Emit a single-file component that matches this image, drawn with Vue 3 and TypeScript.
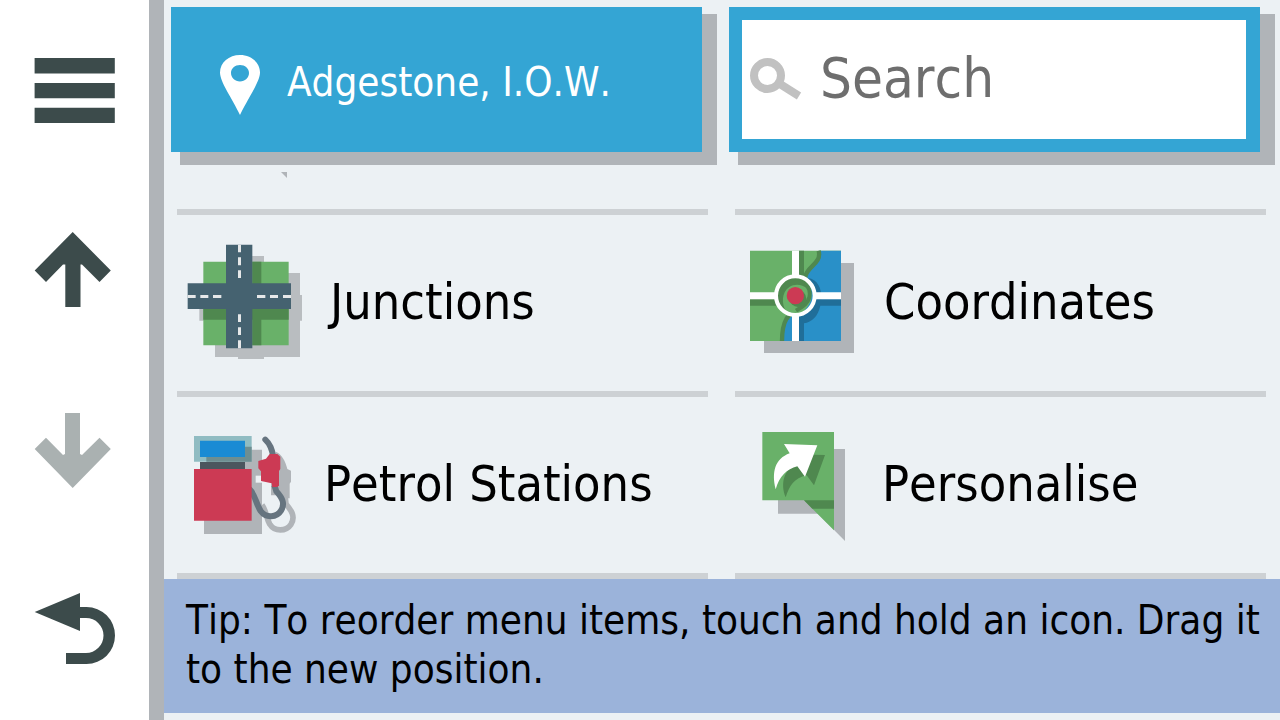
<script setup lang="ts">
import { ref } from 'vue'

type IconName = 'junction' | 'coordinates' | 'petrol' | 'personalise'

interface MenuItem {
  label: string
  icon: IconName
}

const query = ref('')
const items: MenuItem[] = [
  { label: 'Junctions', icon: 'junction' },
  { label: 'Coordinates', icon: 'coordinates' },
  { label: 'Petrol Stations', icon: 'petrol' },
  { label: 'Personalise', icon: 'personalise' },
]
</script>

<template>
  <div class="screen">
    <nav class="sidebar" aria-label="Navigation">
      <button type="button" aria-label="Menu">
        <svg viewBox="0 0 149 180"><path d="M34.600 58h80.200v15.500H34.600zM34.600 83h80.200v15.200H34.600zM34.600 107.700h80.200v15.300H34.600z" /></svg>
      </button>
      <button type="button" aria-label="Scroll up">
        <svg viewBox="0 180 149 180"><path d="M72.700 232 110.800 270.500 99.500 282 82 264.500H80.500V307H65.300V264.500H63L46 282 34.700 270.500Z" /></svg>
      </button>
      <button type="button" aria-label="Scroll down" disabled>
        <svg viewBox="0 360 149 180"><path d="M72.700 488 34.700 449 46 437.800 63 455 65 454V413H80V454L82 455 99.500 437.800 110.800 449Z" /></svg>
      </button>
      <button type="button" aria-label="Back">
        <svg viewBox="0 540 149 180">
          <path d="M34.700 612 80 593V607H86.500A28.500 28.500 0 0 1 86.500 664H66V653H86A17.500 17.500 0 0 0 86 618H80V631Z" />
        </svg>
      </button>
    </nav>

    <main class="content">
      <header class="top">
        <button type="button" class="place">
          <svg class="pin" viewBox="220 55 40 60">
            <path fill-rule="evenodd" d="M240 55C251 55 260 62.500 260 72.500C260 82 248 98 240 115C232 98 220 82 220 72.500C220 62.500 229 55 240 55ZM240 65C235 65 231 68.500 231 73C231 77.800 235 81.500 240 81.500C245 81.500 249 77.800 249 73C249 68.500 245 65 240 65Z" />
          </svg>
          <span>Adgestone, I.O.W.</span>
        </button>
        <label class="search">
          <svg class="glass" viewBox="750 58 52 42">
            <circle cx="767.5" cy="75.500" r="13.500" />
            <path d="M780 84 799 96" />
          </svg>
          <input v-model="query" type="text" placeholder="Search" aria-label="Search" />
        </label>
      </header>

      <section class="list">
        <div class="tile">
          <svg class="remnant" viewBox="0 0 144 37"><path d="M104 0h6v6z" fill="#b0b4b8" /></svg>
        </div>
        <div class="tile"></div>
        <button v-for="item in items" :key="item.label" type="button" class="tile" :class="item.icon">
          <svg v-if="item.icon === 'junction'" class="icon" viewBox="-9 -60 432 528">
            <path fill="#b9bdc0" d="M105 114H360V366H105ZM174 63H252V372H174ZM58 180H366V257H58Z" />
            <path fill="#69b169" d="M70 80H326V331H70Z" />
            <path fill="#4f884f" d="M217 80H244V331H217ZM70 222H326V254H70Z" />
            <path fill="#456270" d="M138 29H217V340H138ZM23 145H333V222H23Z" />
            <path fill="#e6e8e9" d="M174 29h9v23h-9zM174 67h9v24h-9zM174 106h9v23h-9zM174 238h9v23h-9zM174 277h9v23h-9zM174 316h9v24h-9zM23 180h24v9H23zM61 180h24v9H61zM99 180h25v9H99zM231 180h25v9h-25zM270 180h24v9h-24zM309 180h24v9h-24z" />
          </svg>

          <svg v-else-if="item.icon === 'coordinates'" class="icon" viewBox="-15 -75 432 528">
            <path fill="#b0b4b8" d="M72 69H342V339H72Z" />
            <path fill="#69b169" d="M30 32H303V303H30Z" />
            <path fill="#2990c8" d="M238 32H303V303H127C129 256 140 237 163 223C193 207 215 196 212 163C212 145 196 132 194 109C197 82 235 75 238 32Z" />
            <path fill="none" stroke="#4f884f" stroke-width="13" d="M236 32C246 71 201 78 196 110C195 137 215 143 208 171C200 207 151 212 139 237C128 256 126 280 126 303" />
            <path fill="#4f884f" d="M177 32H192V110H177ZM30 178H110V197H30Z" />
            <path fill="#206e99" d="M204 114C232 117 246 145 244 178H303V197H241C234 229 216 246 192 250V303H177V228Z" />
            <circle cx="166" cy="167" r="58" fill="#69b169" />
            <path fill="#4f884f" d="M109 158C113 128 136 109 166 109C184 109 199 116 209 127L202 146C186 132 164 130 148 141C124 157 124 192 139 216C118 207 106 184 109 158Z" />
            <path fill="#2990c8" d="M202 130C229 155 228 193 191 216C196 207 218 188 214 163C212 148 206 140 202 130Z" />
            <path fill="none" stroke="#4f884f" stroke-width="12" d="M197 129C207 146 212 153 208 172C202 194 187 200 168 212" />
            <circle cx="174" cy="176" r="25" fill="#4f884f" />
            <circle cx="166" cy="167" r="26" fill="#cc3a54" />
            <circle cx="166" cy="167" r="58" fill="none" stroke="#fff" stroke-width="12" />
            <path fill="#fff" d="M156 32H177V106H156ZM156 228H177V303H156ZM30 157H105V178H30ZM227 157H303V178H227Z" />
          </svg>

          <svg v-else-if="item.icon === 'petrol'" class="icon" viewBox="-24 -84 432 528">
            <path fill="#b0b4b8" d="M75 74H231V327H57V270H75Z" />
            <path fill="#b0b4b8" d="M272 80C290 87 302 109 307 132L318 137V170L314 176V220H285V211H258V175H275V120Z" />
            <path fill="none" stroke="#b0b4b8" stroke-width="17" d="M231 240C244 257 244 280 254 297C269 321 303 320 318 298C332 275 320 257 303 237L300 210" />
            <path fill="#edf2f5" d="M212 152H231V173H212Z" />
            <path fill="#90bcc2" d="M27 33H200V110H27Z" />
            <path fill="#6e8e91" d="M64 96H180V65H200V110H64Z" />
            <path fill="#1a8bd4" d="M45 47H180V96H45Z" />
            <path fill="#4b565e" d="M45 111H180V132H45Z" />
            <path fill="none" stroke="#66747f" stroke-width="18" d="M193 192C212 210 212 236 227 258C243 280 275 278 288 257C302 234 290 217 274 199L268 180" />
            <path fill="#cc3a54" d="M27 132H200V287H27Z" />
            <path fill="none" stroke="#66747f" stroke-width="18" stroke-linecap="round" d="M241 44C256 58 260 72 265 94" />
            <path fill="#cc3a54" d="M254 87H277L286 95V132L282 138V182L276 186H262L260 175L228 168V139L220 130V108L243 101Z" />
          </svg>

          <svg v-else class="icon" viewBox="-45 -69 432 528">
            <path fill="#b0b4b8" d="M84 87H285V363L204 281H84Z" />
            <path fill="#69b169" d="M37 36H252V331L162 241H37Z" />
            <path fill="#4f884f" d="M162 241H252V266H187Z" />
            <path fill="#4f884f" d="M128 103 225 105 192 196 170 166C132 174 118 198 107 232C91 191 100 149 143 129Z" />
            <path fill="#fff" d="M102 72 202 76 165 170 142 139C110 147 88 169 77 208C64 157 75 116 119 100Z" />
          </svg>
          <span class="label">{{ item.label }}</span>
        </button>
      </section>

      <p class="tip">Tip: To reorder menu items, touch and hold an icon. Drag it to the new position.</p>
    </main>
  </div>
</template>

<style>
body {
  margin: 0;
}
</style>

<style scoped>
.screen {
  display: flex;
  min-height: 100vh;
  background: #ecf1f4;
  color: #000;
  font-family: "DejaVu Sans Condensed", "DejaVu Sans", sans-serif;
  font-kerning: none;
}

button {
  margin: 0;
  padding: 0;
  border: 0;
  background: none;
  color: inherit;
  font: inherit;
  font-kerning: none;
  text-align: left;
}

svg {
  display: block;
  flex: none;
}

.sidebar {
  display: grid;
  grid-template-rows: repeat(4, 1fr);
  flex: none;
  width: 149px;
  border-right: 15px solid #b0b4b8;
  background: #fff;
}

.sidebar button {
  display: flex;
  align-items: center;
}

.sidebar svg {
  width: 100%;
  fill: #3c4b4b;
}

.sidebar button:disabled svg {
  fill: #aab1b1;
}

.content {
  display: flex;
  flex: 1;
  flex-direction: column;
  min-width: 0;
  padding-bottom: 7px;
}

.top {
  display: grid;
  grid-template-columns: 1fr 1fr;
  gap: 27px;
  padding: 7px 20px 20px 7px;
}

.place,
.search {
  display: flex;
  align-items: center;
  box-sizing: border-box;
  min-width: 0;
  height: 145px;
  box-shadow: 12px 10px 0 3px #b0b4b8;
}

.place {
  gap: 27px;
  padding: 5px 0 0 49px;
  background: #34a5d4;
  color: #fff;
  font-size: 40px;
}

.pin {
  width: 40px;
  height: 60px;
  margin-top: 5px;
  fill: #fff;
}

.search {
  gap: 18px;
  padding: 0 8px 4px;
  border: 13px solid #34a5d4;
  border-right-width: 14px;
  background: #fff;
}

.glass {
  width: 52px;
  height: 42px;
  margin-top: 2px;
  fill: none;
  stroke: #c1c1c1;
  stroke-width: 8px;
}

.search input {
  flex: 1;
  min-width: 0;
  padding: 0;
  border: 0;
  outline: 0;
  background: none;
  color: #6e6e6e;
  font: inherit;
  font-kerning: none;
  font-size: 56px;
}

.search input::placeholder {
  color: #6e6e6e;
  opacity: 1;
}

.list {
  display: grid;
  flex: 1;
  grid-template-rows: 43px 1fr 1fr;
  grid-template-columns: 1fr 1fr;
  column-gap: 27px;
  padding: 0 14px 0 13px;
}

.tile {
  display: flex;
  gap: 3px;
  align-items: center;
  min-width: 0;
  border-bottom: 6px solid #cdd1d4;
}

.remnant {
  width: 144px;
  height: 37px;
}

.icon {
  width: 144px;
  height: 176px;
}

.label {
  padding-bottom: 2px;
  font-size: 50px;
  white-space: nowrap;
}

.tile.junction {
  gap: 9px;
}

.tile.coordinates {
  gap: 5px;
}

.tip {
  margin: 0;
  padding: 17px 18px 19px 22px;
  background: #9bb3da;
  font-size: 40px;
  line-height: 49px;
}
</style>
